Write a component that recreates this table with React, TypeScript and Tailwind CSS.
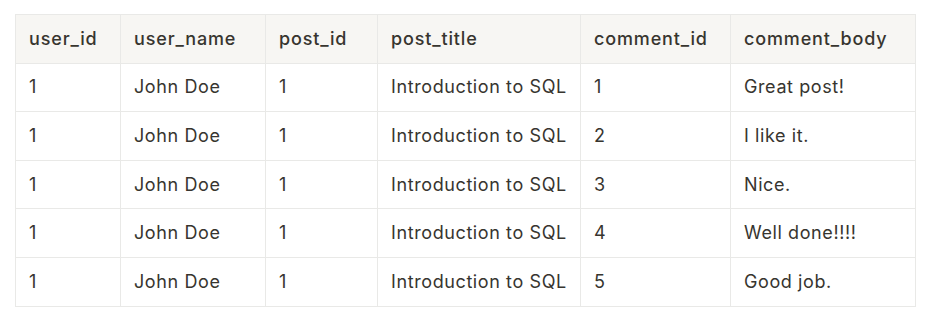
const columns = [
  { key: "user_id", width: "w-[105px]" },
  { key: "user_name", width: "w-[145px]" },
  { key: "post_id", width: "w-[112px]" },
  { key: "post_title", width: "w-[203px]" },
  { key: "comment_id", width: "w-[150px]" },
  { key: "comment_body", width: "w-[185px]" },
];

const rows = [
  ["1", "John Doe", "1", "Introduction to SQL", "1", "Great post!"],
  ["1", "John Doe", "1", "Introduction to SQL", "2", "I like it."],
  ["1", "John Doe", "1", "Introduction to SQL", "3", "Nice."],
  ["1", "John Doe", "1", "Introduction to SQL", "4", "Well done!!!!"],
  ["1", "John Doe", "1", "Introduction to SQL", "5", "Good job."],
];

export default function App() {
  return (
    <div className="w-[946px] h-[324px] bg-white pt-[14px] pl-[15px] font-['Inter',sans-serif] text-[#37352f]">
      <table className="table-fixed border-collapse text-[18px] leading-none">
        <thead>
          <tr className="h-[48.6px] bg-[#f7f6f3]">
            {columns.map((c) => (
              <th
                key={c.key}
                className={`${c.width} border border-[#e9e9e7] px-[13px] text-left font-medium tracking-[0.85px]`}
              >
                {c.key}
              </th>
            ))}
          </tr>
        </thead>
        <tbody>
          {rows.map((row, i) => (
            <tr key={i} className="h-[48.6px]">
              {row.map((cell, j) => (
                <td key={j} className="border border-[#e9e9e7] px-[13px] font-normal tracking-[0.6px]">
                  {cell}
                </td>
              ))}
            </tr>
          ))}
        </tbody>
      </table>
    </div>
  );
}
